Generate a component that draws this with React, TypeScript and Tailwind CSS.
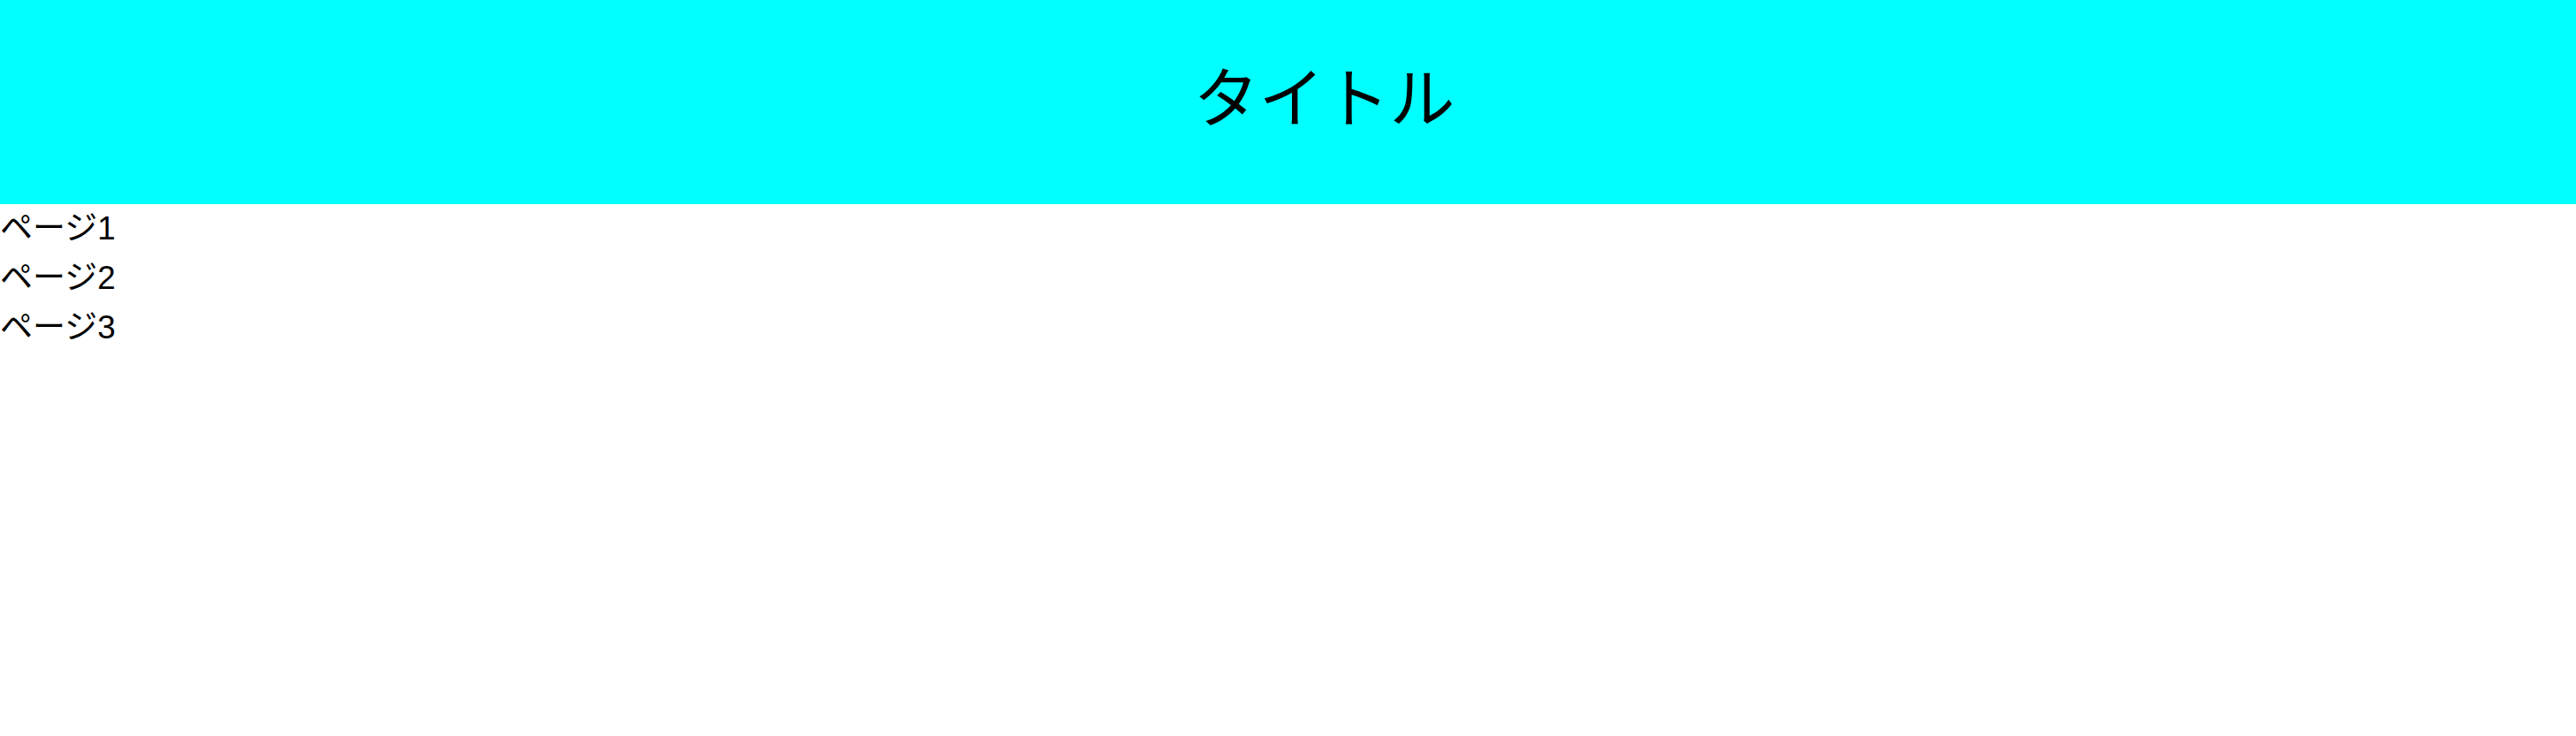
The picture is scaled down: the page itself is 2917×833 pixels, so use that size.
export default function App() {
  return (
    <div className="min-h-screen bg-white text-black" style={{ fontFamily: '"Liberation Sans", "Noto Sans CJK JP", sans-serif' }}>
      <header className="h-[231px] w-full bg-[#00ffff] flex items-center justify-center pl-[82px] pb-[6px]">
        <h1 className="text-[74px] font-normal leading-none">タイトル</h1>
      </header>
      <nav className="flex flex-col">
        <a className="text-[37px] leading-[56px]">ページ1</a>
        <a className="text-[37px] leading-[56px]">ページ2</a>
        <a className="text-[37px] leading-[56px]">ページ3</a>
      </nav>
    </div>
  );
}
